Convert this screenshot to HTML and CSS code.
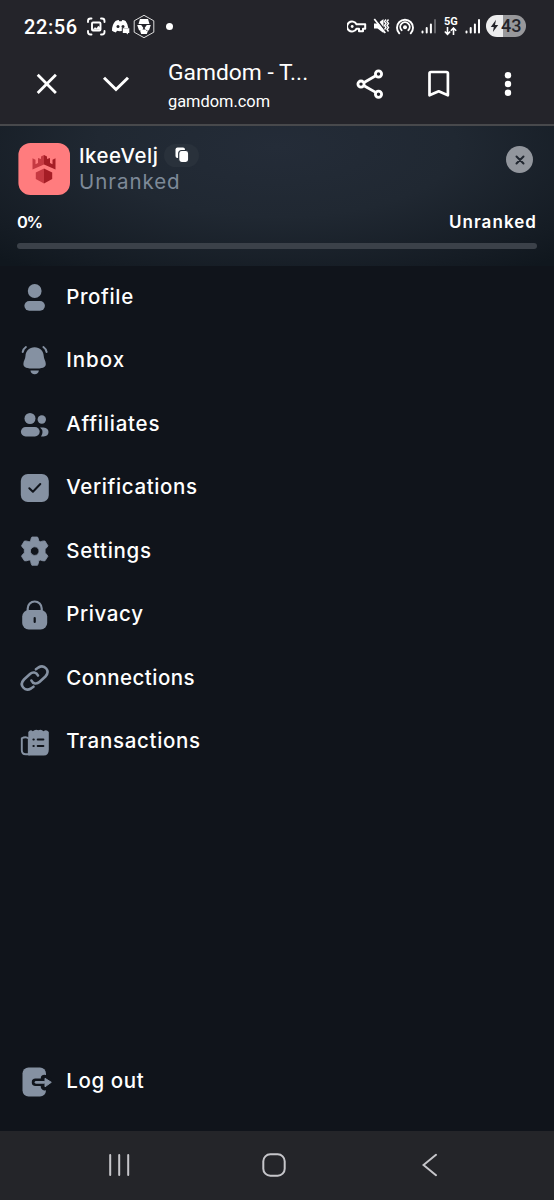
FILE: index.html
```html
<!DOCTYPE html>
<html lang="en">
<head>
<meta charset="utf-8">
<title>Gamdom</title>
<link rel="stylesheet" href="styles.css">
</head>
<body>
<div class="screen">
  <header class="status">
    <span class="clock">22:56</span>
    <svg class="capture" width="20" height="24" viewBox="86 14 20 24" fill="none" stroke="#fff" stroke-width="1.900" stroke-linecap="round"><path d="M88 22v-1q0-2.500 2.500-2.500h1M101 18.500h1q2.500 0 2.500 2.500v1M104.500 31v1q0 2.500-2.500 2.500h-1M91.500 34.500h-1q-2.500 0-2.500-2.500v-1"/><rect x="92" y="22.500" width="8.500" height="8" rx="1"/><path d="M93 29.500l2-2 1.500 1 2-2.500 1.500 1.500v2z" fill="#fff" stroke-width=".5"/></svg>
    <svg class="discord" width="20" height="24" viewBox="111 14 20 24"><path fill="#fff" d="M115.500 21q2-.9 3.200-.9l.7 1.200h2.200l.7-1.200q1.700.1 3.300.9 2.300 3 2.700 7h-6.500v3q-3 .4-4.800-.2l-1.100 1.700q-2.200-.4-3.900-1.700-.3-5.700 3.500-9.800z"/><circle cx="118" cy="26.500" r="1.500" fill="#24242a"/><circle cx="123" cy="26.500" r="1.500" fill="#24242a"/><path fill="#fff" d="M122.800 28.300h6.500v4.700h-1.400v1.500l-1.800-1.500h-3.300z"/></svg>
    <svg class="hex" width="22" height="26" viewBox="133.500 13 22 26"><path d="M144.500 15.300l9.800 5.500v11.400l-9.800 5.500-9.800-5.500V20.800z" fill="none" stroke="#ddd" stroke-width="1"/><path fill="#fff" d="M140.500 19h8l1.500 5h-11zM137.700 25h4l2.200 3-2 3-2.400-.8zM151.300 25h-4l-2.200 3 2 3 2.400-.8zM140.700 31.300l2-1.800h3.600l2 1.800-1 2.700h-5.600z"/></svg>
    <span class="dot"></span>
    <svg class="key" width="20" height="24" viewBox="347 14 20 24" fill="none" stroke="#fff" stroke-width="2" stroke-linejoin="round"><path d="M356.500 24.300a5 5 0 1 0 0 4.400h2.500v2.500h4v-2.500h2.200v-4.400z"/><circle cx="352.200" cy="26.500" r="1.400" fill="#fff" stroke="none"/></svg>
    <svg class="mute" width="18" height="24" viewBox="373 14 18 24" fill="none" stroke="#fff"><path d="M374 23.500h3.500l6-4.500v14l-6-4.500H374z" fill="#fff" stroke="none"/><path d="M375.500 18l11.500 15" stroke="#24242a" stroke-width="1.500"/><path d="M374.300 19l11 14" stroke-width="1.700"/><path d="M386 19.500l-1.500 2 1.500 2-1.500 2 1.500 2-1.500 2M388.500 19.500l-1.500 2 1.500 2-1.500 2 1.500 2-1.500 2 1.500 2" stroke-width="1.400"/></svg>
    <svg class="hotspot" width="20" height="24" viewBox="395 14 20 24" fill="none" stroke="#fff" stroke-width="1.900" stroke-linecap="round"><path d="M399.300 33.300a8 8 0 1 1 11.400 0M401.600 30.200a4.700 4.700 0 1 1 6.800 0"/><circle cx="405" cy="27.200" r="2" fill="#fff" stroke="none"/></svg>
    <svg class="signal" width="16" height="24" viewBox="421.500 14 16 24" stroke="#fff" stroke-width="2" stroke-linecap="round"><path d="M423 31.500v1M427.200 28v4.500M431.400 24.500v8"/><path d="M435.500 20v12.500" stroke="#66666b"/></svg>
    <span class="network"><b>5G</b><svg width="13" height="9" viewBox="0 0 13 9" fill="none" stroke="#fff" stroke-width="1.600"><path d="M3.500 0v7M.8 4.500l2.700 2.800 2.700-2.800M9.500 8V1M6.800 3.700L9.500 1l2.700 2.700"/></svg></span>
    <svg class="signal two" width="16" height="24" viewBox="421.500 14 16 24" stroke="#fff" stroke-width="2" stroke-linecap="round"><path d="M423 31.500v1M427.200 28v4.500M431.400 24.500v8M435.500 20v12.500"/></svg>
    <span class="battery"><svg width="9" height="14" viewBox="0 0 9 14"><path fill="#24242a" d="M6 .8L.8 8h3l-.9 5L8.200 6H5z"/></svg><b>43</b></span>
  </header>

  <div class="toolbar">
    <svg class="tool-close" width="22" height="22" viewBox="0 0 22 22" fill="none" stroke="#fff" stroke-width="2.800"><path d="M1.700 1.700l18.200 18.200M19.900 1.700L1.700 19.900"/></svg>
    <svg class="tool-down" width="28" height="18" viewBox="0 0 28 18" fill="none" stroke="#fff" stroke-width="3"><path d="M2 2.700l12 11.800 12-11.800"/></svg>
    <div class="page"><div class="page-title">Gamdom - T...</div><div class="page-url">gamdom.com</div></div>
    <svg class="tool-share" width="28" height="32" viewBox="356 68 28 32" fill="none" stroke="#fff" stroke-width="2.800"><path d="M364.500 82.200l11.200-6.400M364.500 86l11.200 6.400"/><circle cx="361" cy="84.100" r="3.100"/><circle cx="378.500" cy="74" r="3.100"/><circle cx="378.500" cy="94.200" r="3.100"/></svg>
    <svg class="tool-mark" width="22" height="28" viewBox="0 0 22 28" fill="none" stroke="#fff" stroke-width="2.700" stroke-linejoin="round"><path d="M1.500 25.300V3.500q0-1.500 1.500-1.500h15.400q1.500 0 1.500 1.500v21.800L10.700 21.300z"/></svg>
    <svg class="tool-more" width="8" height="26" viewBox="0 0 8 26" fill="#fff"><circle cx="4" cy="4.300" r="3.200"/><circle cx="4" cy="13" r="3.200"/><circle cx="4" cy="21.700" r="3.200"/></svg>
  </div>

  <section class="profile">
    <div class="identity">
      <svg class="avatar" width="52" height="52" viewBox="0 0 52 52"><rect x=".4" width="51.600" height="52" rx="12" fill="#ff7c7e"/><path fill="#c63a42" d="M14.500 15.300l3 1.500v4.500l2.500-1.300v-5l3 1v-2.500L26 12v9.500l-11.500 5z"/><path fill="#a51d25" d="M37.500 15.300l-3 1.500v4.500L32 20v-5l-3 1v-2.500L26 12v9.500l11.500 5z"/><path fill="#c63a42" d="M26 25.500l-8.200 4v6.500L26 40.500z"/><path fill="#a51d25" d="M26 25.500l8.200 4v6.500L26 40.500z"/></svg>
      <div class="names">
        <div class="name-row"><span class="name">IkeeVelj</span><span class="copy"><svg width="14" height="16" viewBox="0 0 14 16"><rect x=".5" y=".5" width="9.500" height="10.500" rx="2" fill="#fff"/><rect x="3.700" y="3.500" width="10" height="12" rx="3" fill="#fff" stroke="#29313b" stroke-width="1.200"/></svg></span></div>
        <div class="rank">Unranked</div>
      </div>
      <span class="dismiss"><svg width="10" height="10" viewBox="0 0 10 10" stroke="#20262f" stroke-width="2" stroke-linecap="round"><path d="M1.500 1.500l7 7M8.500 1.500l-7 7"/></svg></span>
    </div>
    <div class="progress-text"><span class="percent">0%</span><span class="next">Unranked</span></div>
    <div class="track"></div>
  </section>

  <nav class="menu">
    <a class="item"><svg viewBox="0 0 36 36"><circle cx="18.700" cy="11" r="6.900"/><rect x="8.400" y="21" width="20.500" height="9.700" rx="4.850"/></svg><span class="t-profile">Profile</span></a>
    <a class="item"><svg viewBox="0 0 36 36"><path d="M18.600 4.200c-5.400 0-8.900 3.700-9.100 8.500-.1 3.300-2.100 5-2.100 8.200 0 3.600 3.500 4.600 11.200 4.600s11.200-1 11.200-4.600c0-3.200-2-4.900-2.100-8.200-.2-4.800-3.700-8.500-9.100-8.500zM14.400 27.500h8.500q-.7 3.800-4.250 3.800t-4.250-3.800z"/><path d="M6.700 9q.7-3.300 3.200-5M30.600 9q-.7-3.300-3.200-5" fill="none" stroke="#8591a2" stroke-width="2" stroke-linecap="round"/></svg><span class="t-inbox">Inbox</span></a>
    <a class="item"><svg viewBox="0 0 36 36"><circle cx="14" cy="11.500" r="5.500"/><circle cx="25.800" cy="12.500" r="4.200"/><rect x="4.900" y="20" width="18.800" height="9.500" rx="4.750"/><path d="M24 20.500h3.500q5 .5 5 4.500t-5 4.500H25q1.500-2 1.500-4.500T24 20.500z"/></svg><span class="t-affiliates">Affiliates</span></a>
    <a class="item"><svg viewBox="0 0 36 36"><rect x="4.800" y="4" width="28" height="28" rx="7"/><path d="M13.300 18.200l3.600 3.500 7.400-7.700" fill="none" stroke="#10141b" stroke-width="2" stroke-linecap="round" stroke-linejoin="round"/></svg><span class="t-verifications">Verifications</span></a>
    <a class="item"><svg viewBox="0 0 36 36"><path fill-rule="evenodd" d="M15.900 4h5.600q1 1.200 1.300 4l1.400.8q3-1.200 4.800-.8l2.900 4.700q-.3 1.500-2.800 3.400v3.800q2.500 1.900 2.800 3.400l-2.900 4.500q-1.800.4-4.800-.8l-1.400.8q-.3 3-1.300 4.500h-5.600q-1-1.500-1.300-4.500l-1.400-.8q-3 1.200-4.800.8l-2.900-4.500q.3-1.500 2.800-3.400v-3.800q-2.500-1.900-2.800-3.400l2.900-4.700q1.800-.4 4.800.8l1.400-.8q.3-2.800 1.300-4zM18.700 13.800a4.300 4.300 0 1 0 0 8.600 4.300 4.300 0 1 0 0-8.600z" stroke="#8591a2" stroke-linejoin="round" stroke-width=".8"/></svg><span class="t-settings">Settings</span></a>
    <a class="item"><svg viewBox="0 0 36 36"><path d="M11.700 14v-2.500a7 7 0 0 1 14 0V14" fill="none" stroke="#8591a2" stroke-width="2.200"/><rect x="6.200" y="13" width="25" height="19.500" rx="6.500"/><path d="M18.700 21v4" stroke="#10141b" stroke-width="2.200" stroke-linecap="round"/></svg><span class="t-privacy">Privacy</span></a>
    <a class="item"><svg viewBox="0 0 36 36"><g fill="none" stroke="#8591a2" stroke-width="2.600" stroke-linecap="round"><path d="M15.400 20.500c1.500 3.500 5.500 3.800 8 1.500l6-5.500c5.500-6-1-12.300-7-9l-2.500 1.800"/><path d="M22 15.500c-1.500-3.500-5.500-3.800-8-1.500l-6 5.500c-5.500 6 1 12.300 7 9l2.500-1.800"/></g></svg><span class="t-connections">Connections</span></a>
    <a class="item"><svg viewBox="0 0 36 36"><path d="M12.300 8q2-3 4.500-.8 2.500-2.500 5.500-1 3-1.500 5.200 1 3-2.400 5.300.8v17.500q0 6-5 6H12.300z"/><path d="M12.800 14.500q-3-2.500-7-.2v12q0 4 4 4h3V14.500z" fill="none" stroke="#8591a2" stroke-width="1.900"/><path d="M17.500 15.500h.2M21.800 15.500h5.500M17.500 22h.2M21.800 22h5.500" stroke="#10141b" stroke-width="2.200" stroke-linecap="round"/></svg><span class="t-transactions">Transactions</span></a>
  </nav>

  <a class="item logout"><svg viewBox="0 0 36 36"><rect x="6.500" y="3.500" width="23.500" height="29" rx="6"/><path d="M19.500 18.300h8M28.500 14.500l6 3.800-6 4.300z" fill="#10141b" stroke="#10141b" stroke-width="7.500" stroke-linejoin="round" stroke-linecap="round"/><path d="M20 18.300h8" stroke="#8591a2" stroke-width="2.700" stroke-linecap="round"/><path d="M29 14.300l6.300 4-6.300 4.500z" stroke="#8591a2" stroke-linejoin="round"/></svg><span class="t-logout">Log out</span></a>

  <footer class="android">
    <svg class="recents" width="22" height="24" viewBox="0 0 22 24" stroke="#c6c6ca" stroke-width="2" stroke-linecap="round"><path d="M2.200 2v20M11.200 2v20M20.200 2v20"/></svg>
    <svg class="home" width="24" height="24" viewBox="0 0 24 24" fill="none" stroke="#c6c6ca" stroke-width="2"><rect x="1.300" y="1.300" width="21.400" height="21.400" rx="7"/></svg>
    <svg class="back" width="16" height="24" viewBox="0 0 16 24" fill="none" stroke="#c6c6ca" stroke-width="2" stroke-linecap="round"><path d="M14 1.800L1.500 12 14 22.200"/></svg>
  </footer>
</div>
</body>
</html>
```
FILE: styles.css
```css
* { box-sizing: border-box; }
body { margin: 0; background: #10141b; font-family: Inter, sans-serif; color: #fff; }
svg { display: block; flex: none; }
.screen { width: 554px; height: 1200px; display: flex; flex-direction: column; overflow: hidden; background: #10141b; }
.screen span, .screen div { white-space: nowrap; }

.status { height: 52px; flex: none; display: flex; align-items: center; background: #24242a; }
.clock { width: 62px; margin-left: 24px; padding-top: 1px; font: 500 20px/24px Roboto, sans-serif; letter-spacing: .6px; }
.discord { margin-left: 5px; }
.hex { margin-left: 2px; }
.dot { width: 7px; height: 7px; margin-left: 11px; border-radius: 50%; background: #fff; }
.key { margin-left: auto; }
.mute { margin-left: 6px; }
.hotspot { margin-left: 4px; }
.signal { margin-left: 6.500px; }
.network { width: 14px; margin-left: 7px; display: flex; flex-direction: column; }
.network b { font: 700 11px/10px Roboto, sans-serif; }
.signal.two { margin-left: 7px; }
.battery { width: 40px; height: 22px; margin: 0 28px 0 5px; padding-left: 4px; display: flex; align-items: center; border-radius: 11px; background: linear-gradient(90deg, #ededee 17px, #98989b 17px); color: #24242a; }
.battery b { margin-left: 2px; font: 500 18px/22px Roboto, sans-serif; }

.toolbar { height: 74px; flex: none; display: flex; align-items: center; padding-bottom: 9px; border-bottom: 2px solid #48494c; background: #24242a; }
.tool-close { margin-left: 36px; }
.tool-down { margin-left: 44px; }
.page { width: 188px; margin-left: 38px; padding-top: 6px; font-family: Roboto, sans-serif; }
.page-title { font-size: 22.800px; line-height: 30px; }
.page-url { font-size: 16.400px; line-height: 27px; }
.tool-mark { margin-left: 44px; }
.tool-more { margin-left: 54px; }

.profile { height: 140px; flex: none; padding: 17px 17px 0 18px; background: radial-gradient(ellipse 400px 155px at 50% 15%, #242c38 0%, #202832 45%, #151c24 85%, #10171e 100%); }
.identity { height: 52px; display: flex; }
.names { margin-left: 9px; }
.name-row { height: 24px; display: flex; align-items: center; }
.name { font-size: 20.400px; font-weight: 500; letter-spacing: .55px; }
.copy { width: 35px; height: 23px; margin-left: 6px; display: flex; align-items: center; justify-content: center; border-radius: 12px; background: #29313b; }
.rank { font-size: 20.500px; line-height: 29px; letter-spacing: .95px; color: #7d8998; }
.dismiss { width: 27px; height: 27px; margin: 3px 4px 0 auto; display: flex; align-items: center; justify-content: center; border-radius: 50%; background: #92969d; }
.progress-text { height: 22px; margin-top: 16px; display: flex; justify-content: space-between; font-size: 17px; line-height: 22px; font-weight: 600; }
.percent { margin-left: -1px; font-size: 16.500px; letter-spacing: -1.500px; }
.next { letter-spacing: 1.050px; }
.track { height: 6px; margin: 10px 0 0 -1px; border-radius: 3px; background: #3b4149; }

.menu { height: 508px; flex: none; display: flex; flex-direction: column; }
.item { height: 63.450px; flex: none; display: flex; align-items: center; padding-left: 16px; font-size: 20.500px; font-weight: 500; letter-spacing: .62px; }
.item svg { width: 36px; height: 36px; fill: #8591a2; }
.item span { margin: -2.500px 0 0 14.200px; }
.t-inbox { letter-spacing: 1px; }
.t-affiliates { letter-spacing: .78px; }
.t-settings { letter-spacing: .7px; }
.t-connections { letter-spacing: .45px; }
.t-transactions { letter-spacing: .68px; }
.logout { margin-top: 276px; }

.android { height: 69px; margin-top: auto; flex: none; display: flex; align-items: center; padding-bottom: 2px; background: #242529; }
.recents { margin-left: 108px; }
.home { margin-left: 132px; }
.back { margin-left: 136px; }
```
